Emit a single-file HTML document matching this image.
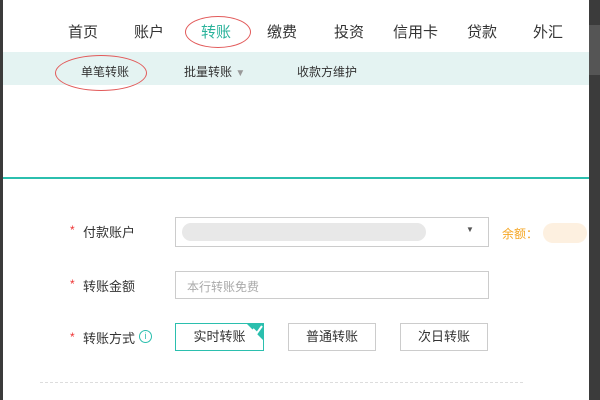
<!DOCTYPE html>
<html><head><meta charset="utf-8"><style>
body{margin:0;width:600px;height:400px;overflow:hidden;background:#fff;font-family:"Liberation Sans","Noto Sans CJK SC",sans-serif;position:relative}
.a{position:absolute}
.nav{top:21px;font-size:15px;color:#333}
.sub{top:63px;font-size:12px;color:#333}
.lab{font-size:13px;color:#333}
.star{color:#e33;font-size:12px}
.box{border:1px solid #ccc;box-sizing:border-box;background:#fff}
.btn{border:1px solid #ccc;box-sizing:border-box;font-size:13px;color:#333;text-align:center;line-height:26px}
</style></head><body>
<div class="a" style="left:0;top:0;width:3px;height:400px;background:#3b3b3b"></div>
<div class="a" style="left:589px;top:0;width:11px;height:400px;background:#3b3b3b"></div>
<div class="a" style="left:589px;top:25px;width:11px;height:50px;background:#555"></div>
<div class="a" style="left:3px;top:52px;width:586px;height:33px;background:#e4f3f2"></div>
<div class="a nav" style="left:68px">首页</div>
<div class="a nav" style="left:134px">账户</div>
<div class="a nav" style="left:201px;color:#2bb39b">转账</div>
<div class="a nav" style="left:267px">缴费</div>
<div class="a nav" style="left:334px">投资</div>
<div class="a nav" style="left:393px">信用卡</div>
<div class="a nav" style="left:467px">贷款</div>
<div class="a nav" style="left:533px">外汇</div>
<div class="a" style="left:185px;top:16px;width:64px;height:30px;border:1px solid #e25a5a;border-radius:50%"></div>
<div class="a sub" style="left:81px">单笔转账</div>
<div class="a sub" style="left:184px">批量转账 <span style="color:#999;font-size:10px">▼</span></div>
<div class="a sub" style="left:297px">收款方维护</div>
<div class="a" style="left:55px;top:55px;width:90px;height:34px;border:1px solid #e25a5a;border-radius:50%"></div>
<div class="a" style="left:3px;top:177px;width:586px;height:2px;background:#2bbfae"></div>
<div class="a star" style="left:70px;top:223px">*</div><div class="a lab" style="left:83px;top:222px">付款账户</div>
<div class="a star" style="left:70px;top:277px">*</div><div class="a lab" style="left:83px;top:276px">转账金额</div>
<div class="a star" style="left:70px;top:330px">*</div><div class="a lab" style="left:83px;top:328px">转账方式</div>
<div class="a" style="left:139px;top:330px;width:11px;height:11px;border:1px solid #2bbfae;border-radius:50%;font-size:9px;color:#2bbfae;text-align:center;line-height:11px">i</div>
<div class="a box" style="left:175px;top:217px;width:314px;height:30px"></div>
<div class="a" style="left:182px;top:223px;width:244px;height:18px;background:#e8e8e8;border-radius:9px"></div>
<div class="a" style="left:466px;top:225px;font-size:8px;color:#555">▼</div>
<div class="a" style="left:502px;top:225px;font-size:12px;color:#f5a623">余额：</div>
<div class="a" style="left:543px;top:223px;width:44px;height:20px;background:#fdf0e0;border-radius:10px"></div>
<div class="a box" style="left:175px;top:271px;width:314px;height:28px;font-size:12px;color:#aaa;padding:6px 11px">本行转账免费</div>
<div class="a btn" style="left:175px;top:323px;width:89px;height:28px;border-color:#2bbfae">实时转账</div>
<svg class="a" style="left:244px;top:323px" width="20" height="20"><polygon points="2,0 20,0 20,18" fill="#2bbfae"/><path d="M9,6 L13,10 L18,3" stroke="#fff" stroke-width="2" fill="none"/></svg>
<div class="a btn" style="left:288px;top:323px;width:88px;height:28px">普通转账</div>
<div class="a btn" style="left:400px;top:323px;width:88px;height:28px">次日转账</div>
<div class="a" style="left:40px;top:382px;width:483px;border-top:1px dashed #ddd"></div>
</body></html>
